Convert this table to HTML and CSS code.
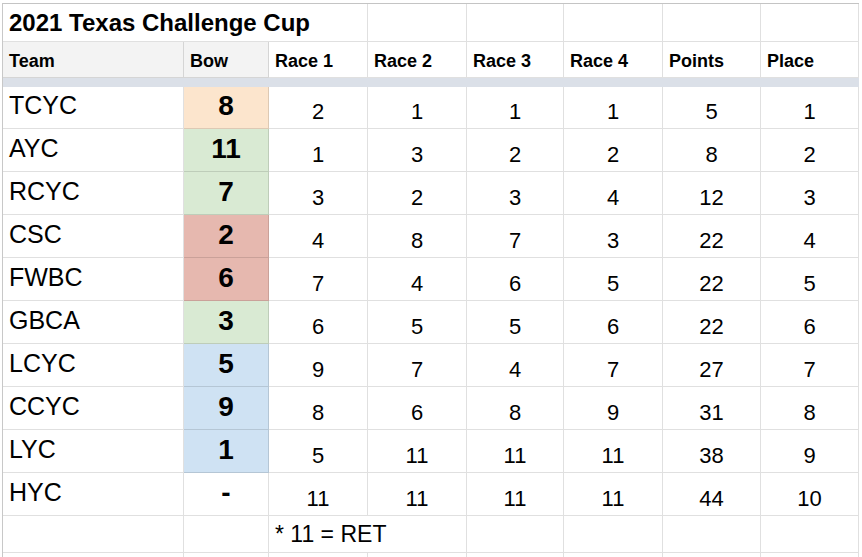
FILE: index.html
```html
<!DOCTYPE html>
<html lang="en">
<head>
<meta charset="utf-8">
<title>2021 Texas Challenge Cup</title>
<link rel="stylesheet" href="styles.css">
</head>
<body>
<div class="sheet">
  <div class="c title span3">2021 Texas Challenge Cup</div>
  <div class="c"></div><div class="c"></div><div class="c"></div><div class="c"></div><div class="c"></div>

  <div class="c hd gray">Team</div>
  <div class="c hd gray">Bow</div>
  <div class="c hd">Race 1</div>
  <div class="c hd">Race 2</div>
  <div class="c hd">Race 3</div>
  <div class="c hd">Race 4</div>
  <div class="c hd">Points</div>
  <div class="c hd">Place</div>

  <div class="sep"></div>

  <div class="c name">TCYC</div><div class="c bow peach">8</div>
  <div class="c num">2</div><div class="c num">1</div><div class="c num">1</div><div class="c num">1</div><div class="c num">5</div><div class="c num">1</div>

  <div class="c name">AYC</div><div class="c bow green">11</div>
  <div class="c num">1</div><div class="c num">3</div><div class="c num">2</div><div class="c num">2</div><div class="c num">8</div><div class="c num">2</div>

  <div class="c name">RCYC</div><div class="c bow green">7</div>
  <div class="c num">3</div><div class="c num">2</div><div class="c num">3</div><div class="c num">4</div><div class="c num">12</div><div class="c num">3</div>

  <div class="c name">CSC</div><div class="c bow red">2</div>
  <div class="c num">4</div><div class="c num">8</div><div class="c num">7</div><div class="c num">3</div><div class="c num">22</div><div class="c num">4</div>

  <div class="c name">FWBC</div><div class="c bow red">6</div>
  <div class="c num">7</div><div class="c num">4</div><div class="c num">6</div><div class="c num">5</div><div class="c num">22</div><div class="c num">5</div>

  <div class="c name">GBCA</div><div class="c bow green">3</div>
  <div class="c num">6</div><div class="c num">5</div><div class="c num">5</div><div class="c num">6</div><div class="c num">22</div><div class="c num">6</div>

  <div class="c name">LCYC</div><div class="c bow blue">5</div>
  <div class="c num">9</div><div class="c num">7</div><div class="c num">4</div><div class="c num">7</div><div class="c num">27</div><div class="c num">7</div>

  <div class="c name">CCYC</div><div class="c bow blue">9</div>
  <div class="c num">8</div><div class="c num">6</div><div class="c num">8</div><div class="c num">9</div><div class="c num">31</div><div class="c num">8</div>

  <div class="c name">LYC</div><div class="c bow blue">1</div>
  <div class="c num">5</div><div class="c num">11</div><div class="c num">11</div><div class="c num">11</div><div class="c num">38</div><div class="c num">9</div>

  <div class="c name">HYC</div><div class="c bow">-</div>
  <div class="c num">11</div><div class="c num">11</div><div class="c num">11</div><div class="c num">11</div><div class="c num">44</div><div class="c num">10</div>

  <div class="c"></div><div class="c"></div>
  <div class="c note span2">* 11 = RET</div>
  <div class="c"></div><div class="c"></div><div class="c"></div><div class="c"></div>

  <div class="c"></div><div class="c"></div><div class="c"></div><div class="c"></div><div class="c"></div><div class="c"></div><div class="c"></div><div class="c"></div>
</div>
</body>
</html>
```
FILE: styles.css
```css
html, body {
  margin: 0;
  padding: 0;
  background: #ffffff;
}

body {
  font-family: "Liberation Sans", Arial, sans-serif;
  color: #000000;
  overflow: hidden;
  height: 557px;
}

.sheet {
  margin: 3px 0 0 2px;
  border-top: 1px solid #c4c4c4;
  border-left: 1px solid #c8c8c8;
  display: grid;
  grid-template-columns: 181px 85px 99px 99px 97px 99px 98px 98px;
  grid-template-rows: 38px 36px 9px 42px repeat(9, 43px) 37px 5px;
  width: max-content;
  overflow: hidden;
}

.c {
  box-sizing: border-box;
  border-right: 1px solid rgba(0, 0, 0, 0.12);
  border-bottom: 1px solid rgba(0, 0, 0, 0.12);
  display: flex;
  align-items: flex-end;
  padding-left: 6px;
  white-space: nowrap;
  line-height: 1;
}

.span3 { grid-column: span 3; }
.span2 { grid-column: span 2; }

.title {
  font-size: 24px;
  font-weight: bold;
  padding-bottom: 6px;
}

.hd {
  font-size: 18px;
  font-weight: bold;
  padding-bottom: 7px;
}

.gray { background: #f3f3f3; }

.sep {
  grid-column: 1 / -1;
  background: #dbe0e8;
  box-shadow: -3px 0 0 #dbe0e8;
}

.name {
  font-size: 25px;
  padding-bottom: 10px;
}

.bow {
  font-size: 28px;
  font-weight: bold;
  justify-content: center;
  padding-left: 0;
  padding-bottom: 8px;
}

.num {
  font-size: 22px;
  justify-content: center;
  padding-left: 0;
  padding-bottom: 5px;
}

.note {
  font-size: 23px;
  padding-bottom: 6px;
}

.peach { background: #fce5cd; }
.green { background: #d9ead3; }
.red { background: #e6b8af; }
.blue { background: #cfe2f3; }
```
